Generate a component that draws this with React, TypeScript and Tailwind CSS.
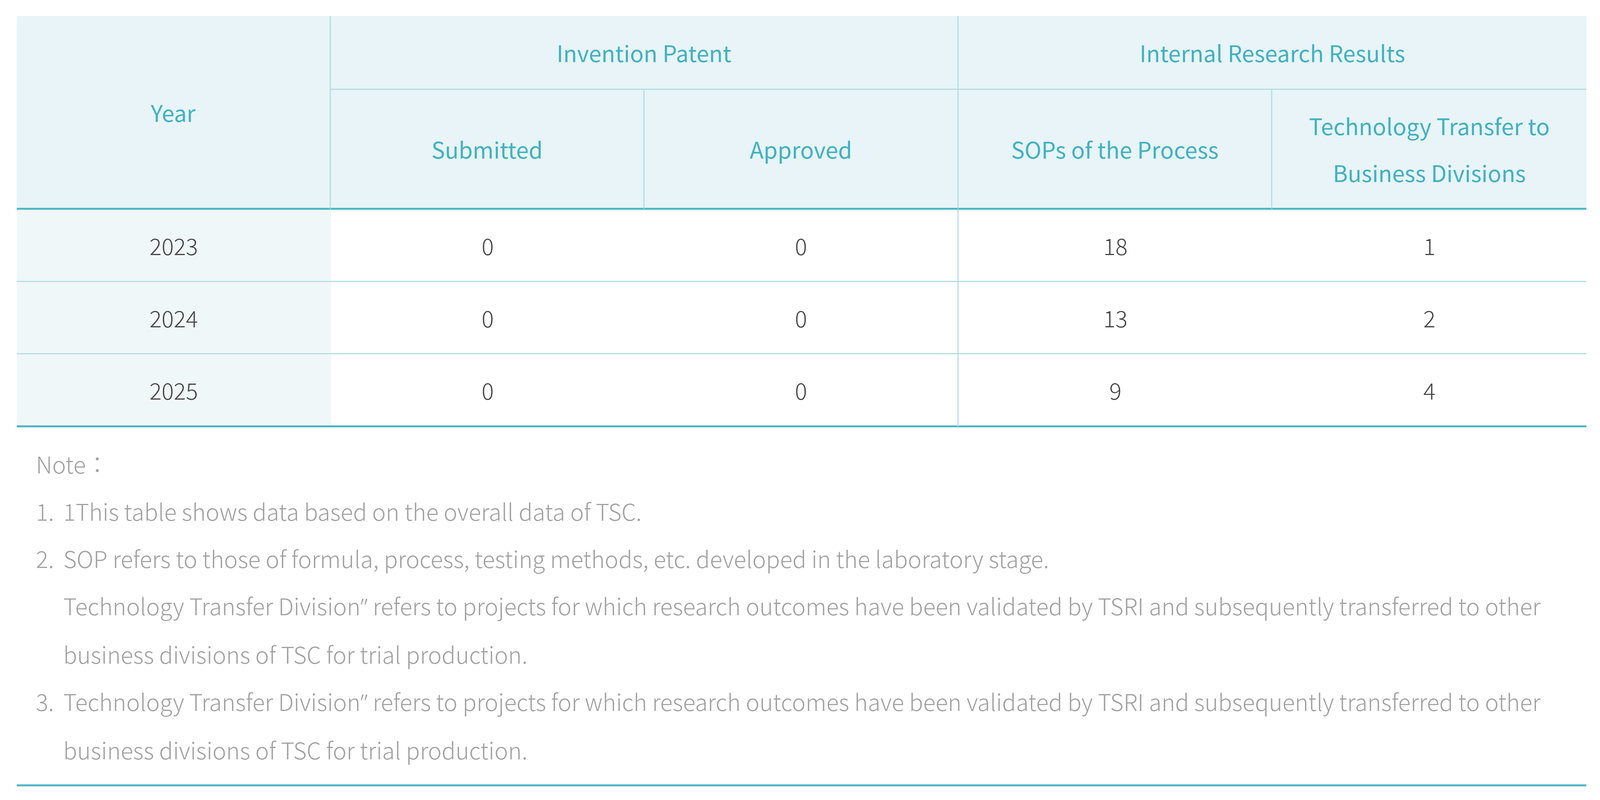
import React from "react";

const font = { fontFamily: '"Noto Sans CJK TC", "Noto Sans", sans-serif' };

const rows = [
  { year: "2023", v: ["0", "0", "18", "1"] },
  { year: "2024", v: ["0", "0", "13", "2"] },
  { year: "2025", v: ["0", "0", "9", "4"] },
];

function Q() {
  return <span className="font-['Noto_Sans',sans-serif]">”</span>;
}

export default function App() {
  return (
    <div className="w-full min-h-[2048px] bg-white pl-[43px] pr-[35px] pt-[41px]" style={font}>
      <table className="w-full table-fixed border-separate border-spacing-0 text-[58px] leading-[120px]">
        <colgroup>
          <col className="w-1/5" />
          <col className="w-1/5" />
          <col className="w-1/5" />
          <col className="w-1/5" />
          <col className="w-1/5" />
        </colgroup>
        <thead className="text-[#41b1c1]">
          <tr>
            <th
              rowSpan={2}
              className="bg-[#e8f4f7] border-r-[3px] border-b-[5px] border-r-[#b3dde3] border-b-[#4fb6c2] font-normal text-center align-middle"
            >
              Year
            </th>
            <th
              colSpan={2}
              className="h-[189px] bg-[#e8f4f7] border-r-[3px] border-b-[3px] border-[#b3dde3] font-normal text-center align-middle"
            >
              Invention Patent
            </th>
            <th
              colSpan={2}
              className="h-[189px] bg-[#e8f4f7] border-b-[3px] border-[#b3dde3] font-normal text-center align-middle"
            >
              Internal Research Results
            </th>
          </tr>
          <tr>
            <th className="h-[307px] bg-[#e8f4f7] border-r-[3px] border-r-[#b3dde3] border-b-[5px] border-b-[#4fb6c2] font-normal text-center align-middle">
              Submitted
            </th>
            <th className="h-[307px] bg-[#e8f4f7] border-r-[3px] border-r-[#b3dde3] border-b-[5px] border-b-[#4fb6c2] font-normal text-center align-middle">
              Approved
            </th>
            <th className="h-[307px] bg-[#e8f4f7] border-r-[3px] border-r-[#b3dde3] border-b-[5px] border-b-[#4fb6c2] font-normal text-center align-middle">
              SOPs of the Process
            </th>
            <th className="h-[307px] bg-[#e8f4f7] border-b-[5px] border-b-[#4fb6c2] font-normal text-center align-middle">
              Technology Transfer to
              <br />
              Business Divisions
            </th>
          </tr>
        </thead>
        <tbody className="text-[#444444] font-light">
          {rows.map((r, i) => {
            const last = i === rows.length - 1;
            const b = last
              ? "border-b-[5px] border-b-[#4fb6c2] h-[187px]"
              : "border-b-[3px] border-b-[#b5dde3] h-[185px]";
            return (
              <tr key={r.year}>
                <td className={`${b} bg-[#f0f7f9] text-center align-middle`}>{r.year}</td>
                <td className={`${b} bg-white text-center align-middle`}>{r.v[0]}</td>
                <td className={`${b} bg-white border-r-[3px] border-r-[#b8dfe4] text-center align-middle`}>{r.v[1]}</td>
                <td className={`${b} bg-white text-center align-middle`}>{r.v[2]}</td>
                <td className={`${b} bg-white text-center align-middle`}>{r.v[3]}</td>
              </tr>
            );
          })}
        </tbody>
      </table>

      <div className="pt-[32px] pb-[29px] pl-[49px] pr-[10px] border-b-[5px] border-b-[#4fb6c2] text-[59px] leading-[121px] text-[#a0a0a0] font-light">
        <p>Note：</p>
        <div className="flex">
          <span className="w-[70px] shrink-0">1.</span>
          <span>1This table shows data based on the overall data of TSC.</span>
        </div>
        <div className="flex">
          <span className="w-[70px] shrink-0">2.</span>
          <span>
            SOP refers to those of formula, process, testing methods, etc. developed in the laboratory stage.
            <br />
            Technology Transfer Division<Q /> refers to projects for which research outcomes have been validated by TSRI and subsequently transferred to other
            <br />
            business divisions of TSC for trial production.
          </span>
        </div>
        <div className="flex">
          <span className="w-[70px] shrink-0">3.</span>
          <span>
            Technology Transfer Division<Q /> refers to projects for which research outcomes have been validated by TSRI and subsequently transferred to other
            <br />
            business divisions of TSC for trial production.
          </span>
        </div>
      </div>
    </div>
  );
}
